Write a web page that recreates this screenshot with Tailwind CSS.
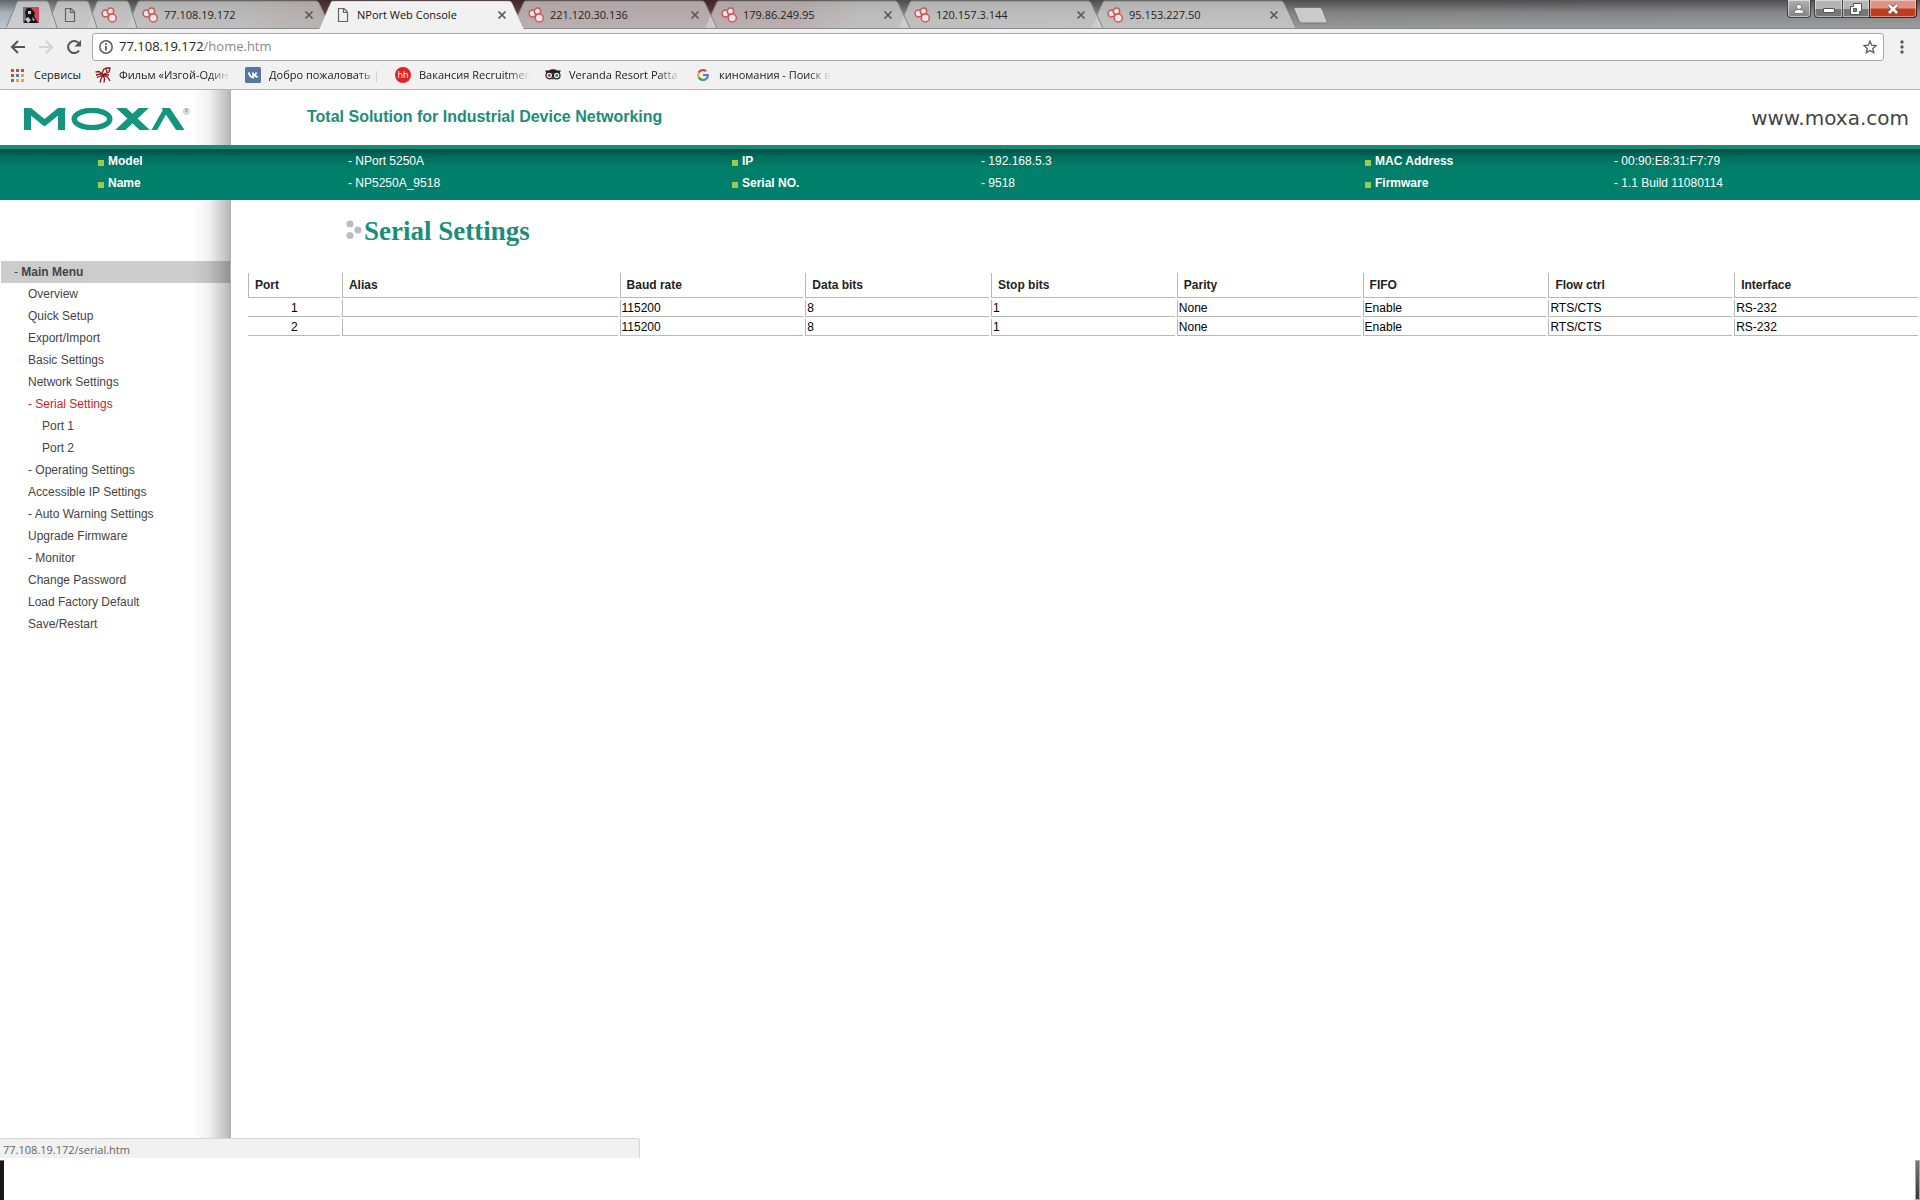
<!DOCTYPE html>
<html lang="en">
<head>
<meta charset="utf-8">
<title>NPort Web Console</title>
<script src="https://cdn.jsdelivr.net/npm/@tailwindcss/browser@4"></script>
</head>
<body class="flex min-h-screen flex-col bg-white font-['Liberation_Sans',Arial,sans-serif] text-xs text-black">

<svg class="hidden" aria-hidden="true">
  <symbol id="moxa-dots" viewBox="0 0 16 16">
    <g fill="#f3e4e4" stroke="#c9595b" stroke-width="1.5"><circle cx="4.500" cy="6.500" r="3.400"/><circle cx="9.500" cy="4.200" r="3.200"/><circle cx="11.300" cy="11" r="4"/></g>
  </symbol>
  <symbol id="page" viewBox="0 0 16 16"><path d="M3.500 1.500h5.500l3.500 3.500v9.500h-9zM8.500 1.500v4h4" fill="none" stroke="#626262" stroke-width="1.200"/></symbol>
  <symbol id="close" viewBox="0 0 10 10"><path d="M1.500 1.500l7 7m0-7l-7 7" stroke="#5a5a5a" stroke-width="1.700"/></symbol>
  <symbol id="tab-shape" viewBox="0 0 205 28" preserveAspectRatio="none"><path d="M0 28L12 2Q13 1 14 1H190Q192 1 193 3L205 28" stroke="#858585"/></symbol>
  <symbol id="pin-shape" viewBox="0 0 52 28"><path d="M0 28L11 2Q12 1 13 1H40Q42 1 43 3L51 28" stroke="#858585"/></symbol>
</svg>

<header class="flex flex-col bg-[#f1f1f1] font-['Open_Sans','Noto_Sans',sans-serif]">
  <div class="flex h-[29px] items-start border-b border-[#8b8b8d] bg-[linear-gradient(to_bottom,rgba(30,25,27,0.55),rgba(60,60,60,0.1)_45%,rgba(255,255,255,0.12)),linear-gradient(to_right,#b4c0cc_0px,#a9adb0_50px,#858585_130px,#777_240px,#6a3c40_320px,#6b3439_790px,#858585_860px,#8a8a8a_1300px,#8e9193_1920px)] pl-1.5">
    <nav class="flex" aria-label="Tabs">
      <button class="relative z-[7] flex h-7 w-[52px] items-center pl-[17px] pt-0.5" aria-label="Pinned tab 1">
        <svg class="absolute left-0 top-0 h-7 w-[52px] fill-[#cfcfcf]/80"><use href="#pin-shape"/></svg>
        <svg class="relative size-4" viewBox="0 0 16 16"><path fill="#777078" d="M0 0h16v16H0z"/><path fill="#d44558" d="M9 0h7v14h-5z"/><path fill="#181519" d="M4 1l4 0 4 5-1 3 4 7H1l2-6-1-5z"/><path d="M5 4h3v3H5zM2 12l3-2 3 3-3 3zM9 10l3 3-2 1z" fill="#c9c4c6"/></svg>
      </button>
      <button class="relative z-[6] -ml-3 flex h-7 w-[52px] items-center pl-4 pt-0.5" aria-label="Pinned tab 2">
        <svg class="absolute left-0 top-0 h-7 w-[52px] fill-[#cfcfcf]/80"><use href="#pin-shape"/></svg>
        <svg class="relative size-4"><use href="#page"/></svg>
      </button>
      <button class="relative z-[5] -ml-3 flex h-7 w-[52px] items-center pl-[15px] pt-0.5" aria-label="Pinned tab 3">
        <svg class="absolute left-0 top-0 h-7 w-[52px] fill-[#cfcfcf]/80"><use href="#pin-shape"/></svg>
        <svg class="relative size-4"><use href="#moxa-dots"/></svg>
      </button>
      <div class="relative z-[4] -ml-3 flex h-7 w-[205px] items-center gap-1.5 pl-4 pr-[17px] pt-0.5">
        <svg class="absolute left-0 top-0 h-7 w-[205px] fill-[#d0d0d0]/75"><use href="#tab-shape"/></svg>
        <svg class="relative size-4"><use href="#moxa-dots"/></svg>
        <a href="#" class="relative flex-1 text-[11px] text-[#222]">77.108.19.172</a>
        <button class="relative" aria-label="Close tab"><svg class="size-2.5"><use href="#close"/></svg></button>
      </div>
      <div class="relative z-10 -ml-3 flex h-[29px] w-[205px] items-center gap-1.5 pl-4 pr-[17px] pt-px">
        <svg class="absolute left-0 top-0 h-[29px] w-[205px] fill-[#f1f1f1]" viewBox="0 0 205 29"><path d="M0 29L12 2Q13 1 14 1H190Q192 1 193 3L205 29" stroke="#9a9a9a" stroke-width="0.5"/></svg>
        <svg class="relative size-4"><use href="#page"/></svg>
        <a href="#" class="relative flex-1 text-[11px] text-[#111]">NPort Web Console</a>
        <button class="relative" aria-label="Close tab"><svg class="size-2.5"><use href="#close"/></svg></button>
      </div>
      <div class="relative z-[4] -ml-3 flex h-7 w-[205px] items-center gap-1.5 pl-4 pr-[17px] pt-0.5">
        <svg class="absolute left-0 top-0 h-7 w-[205px] fill-[#d0d0d0]/75"><use href="#tab-shape"/></svg>
        <svg class="relative size-4"><use href="#moxa-dots"/></svg>
        <a href="#" class="relative flex-1 text-[11px] text-[#222]">221.120.30.136</a>
        <button class="relative" aria-label="Close tab"><svg class="size-2.5"><use href="#close"/></svg></button>
      </div>
      <div class="relative z-[3] -ml-3 flex h-7 w-[205px] items-center gap-1.5 pl-4 pr-[17px] pt-0.5">
        <svg class="absolute left-0 top-0 h-7 w-[205px] fill-[#d0d0d0]/75"><use href="#tab-shape"/></svg>
        <svg class="relative size-4"><use href="#moxa-dots"/></svg>
        <a href="#" class="relative flex-1 text-[11px] text-[#222]">179.86.249.95</a>
        <button class="relative" aria-label="Close tab"><svg class="size-2.5"><use href="#close"/></svg></button>
      </div>
      <div class="relative z-[2] -ml-3 flex h-7 w-[205px] items-center gap-1.5 pl-4 pr-[17px] pt-0.5">
        <svg class="absolute left-0 top-0 h-7 w-[205px] fill-[#d0d0d0]/75"><use href="#tab-shape"/></svg>
        <svg class="relative size-4"><use href="#moxa-dots"/></svg>
        <a href="#" class="relative flex-1 text-[11px] text-[#222]">120.157.3.144</a>
        <button class="relative" aria-label="Close tab"><svg class="size-2.5"><use href="#close"/></svg></button>
      </div>
      <div class="relative z-[1] -ml-3 flex h-7 w-[205px] items-center gap-1.5 pl-4 pr-[17px] pt-0.5">
        <svg class="absolute left-0 top-0 h-7 w-[205px] fill-[#d0d0d0]/75"><use href="#tab-shape"/></svg>
        <svg class="relative size-4"><use href="#moxa-dots"/></svg>
        <a href="#" class="relative flex-1 text-[11px] text-[#222]">95.153.227.50</a>
        <button class="relative" aria-label="Close tab"><svg class="size-2.5"><use href="#close"/></svg></button>
      </div>
    </nav>
    <button class="-ml-1 mt-[7px]" aria-label="New tab"><svg class="h-[17px] w-9" viewBox="0 0 36 17"><path d="M2 2Q1.500 .5 3 .5H27Q29 .5 30 2L35 14Q35.500 16 34 16H10Q8 16 7 14Z" fill="#cbcbcb" stroke="#777"/></svg></button>
    <div class="ml-auto mr-[3px] flex">
      <button class="mr-[3px] flex h-[18px] w-6 items-center justify-center rounded-b-[4px] border border-t-0 border-[#444] bg-linear-to-b from-[#b0b0b0] via-[#9a9a9a] to-[#838383] shadow-[inset_0_0_0_1px_rgba(255,255,255,0.5)]" aria-label="User">
        <svg class="size-3" viewBox="0 0 12 12"><path d="M1.500 10.500V8.500Q2 7 4.500 6.500H7.500Q10 7 10.500 8.500v2z" fill="#fff" stroke="#555" stroke-width=".7"/><circle cx="6" cy="3.800" r="2.500" fill="#fff" stroke="#555" stroke-width=".7"/></svg>
      </button>
      <button class="flex h-[18px] w-[29px] items-center justify-center rounded-bl-[4px] border border-t-0 border-[#444] bg-linear-to-b from-[#b5b5b5] from-50% to-[#777] to-55% shadow-[inset_0_0_0_1px_rgba(255,255,255,0.45)]" aria-label="Minimize">
        <svg class="h-3 w-3" viewBox="0 0 12 12"><path d="M.5 5.500h11v4H.5z" fill="#fff" stroke="#555"/></svg>
      </button>
      <button class="flex h-[18px] w-[26px] items-center justify-center border-b border-[#444] bg-linear-to-b from-[#b5b5b5] from-50% to-[#777] to-55% shadow-[inset_0_0_0_1px_rgba(255,255,255,0.45)]" aria-label="Restore">
        <svg class="size-3" viewBox="0 0 12 12"><path d="M3.500 .5h8v8h-2v3h-9v-8h3z" fill="#fff" stroke="#555"/><path d="M3.500 5.500h3v3h-3z" fill="#888" stroke="#555"/></svg>
      </button>
      <button class="flex h-[18px] w-12 items-center justify-center rounded-br-[4px] border border-t-0 border-[#4a1a12] bg-linear-to-b from-[#dc9484] from-45% to-[#c03a20] to-55% shadow-[inset_0_0_0_1px_rgba(255,255,255,0.45)]" aria-label="Close">
        <svg class="h-3 w-3" viewBox="0 0 12 12"><path d="M2 2l8 8m0-8l-8 8" stroke="#555" stroke-width="4"/><path d="M2 2l8 8m0-8l-8 8" stroke="#fff" stroke-width="2.500"/></svg>
      </button>
    </div>
  </div>

  <div class="flex h-8 items-end">
    <div class="flex h-7 w-[92px] items-center gap-3 pl-2.5">
      <button aria-label="Back"><svg class="size-4" viewBox="0 0 16 16"><path d="M15 8H2.500M8 2L2 8l6 6" fill="none" stroke="#555" stroke-width="2"/></svg></button>
      <button aria-label="Forward"><svg class="size-4" viewBox="0 0 16 16"><path d="M1 8h12.500M8 2l6 6-6 6" fill="none" stroke="#d2d2d2" stroke-width="2"/></svg></button>
      <button aria-label="Reload"><svg class="size-4" viewBox="0 0 16 16"><path d="M13 11.500A6 6 0 1 1 12.300 3.800" fill="none" stroke="#555" stroke-width="2.100"/><path d="M15 1v6.500H8.500z" fill="#555"/></svg></button>
    </div>
    <div class="flex h-7 flex-1 items-center rounded-[3px] border border-[#a9a9a9] bg-white pl-1.5 pr-1.5">
      <svg class="mr-1.5 size-[14px]" viewBox="0 0 14 14"><circle cx="7" cy="7" r="6.200" fill="none" stroke="#5a5a5a" stroke-width="1.500"/><path d="M6.100 6h1.800v4.500H6.100zM6.100 3.300h1.800V5H6.100z" fill="#5a5a5a"/></svg>
      <a href="#" class="flex-1 text-[13px] text-[#222]">77.108.19.172<span class="text-[#8a8a8a]">/home.htm</span></a>
      <button aria-label="Bookmark"><svg class="size-[14px]" viewBox="0 0 14 14"><path d="M7 1.200l1.700 4 4.300.4-3.200 2.900.9 4.200L7 10.500l-3.700 2.200.9-4.200L1 5.600l4.300-.4z" fill="none" stroke="#5a5a5a" stroke-width="1.300"/></svg></button>
    </div>
    <button class="flex h-7 w-9 items-center justify-center" aria-label="Menu"><svg class="h-[14px] w-1" viewBox="0 0 4 14" fill="#5a5a5a"><circle cx="2" cy="2" r="1.700"/><circle cx="2" cy="7" r="1.700"/><circle cx="2" cy="12" r="1.700"/></svg></button>
  </div>

  <nav class="flex h-[29px] items-center gap-[14px] border-b border-[#b5b5b5] pl-2.5 text-[11px] whitespace-nowrap text-[#222]" aria-label="Bookmarks">
    <a href="#" class="flex items-center gap-2"><svg class="size-4" viewBox="0 0 16 16"><g fill="#cc4b3f"><path d="M1 2h3v3H1zM6 2h3v3H6zM11 2h3v3h-3zM1 7h3v3H1z"/></g><path d="M6 7h3v3H6z" fill="#4a80c8"/><path d="M11 7h3v3h-3zM6 12h3v3H6zM11 12h3v3h-3z" fill="#d9a93a"/><path d="M1 12h3v3H1z" fill="#3d9360"/></svg><span class="w-[47px]">Сервисы</span></a>
    <a href="#" class="flex items-center gap-2"><svg class="size-4" viewBox="0 0 16 16"><g fill="none" stroke="#8d1719" stroke-width="1.300"><path d="M7 6L9 2l3-1 3 0-1 4-5 2M11 2l1 3M.5 5L4 4.500 7 7M1 8l5-1M2 10.500L7 8.500M5 15.500L6 12 7.500 9M8.500 9l1 3-.5 3.500M9 8.500l3.500 1.500 2.500 4M9 7.500l5 .5"/></g><circle cx="8" cy="8" r="1.800" fill="#8d1719"/></svg><span class="w-28 overflow-hidden [mask-image:linear-gradient(to_right,black_80%,transparent)]">Фильм «Изгой-Один</span></a>
    <a href="#" class="flex items-center gap-2"><svg class="size-4" viewBox="0 0 16 16"><rect width="16" height="16" rx="1.500" fill="#55779f"/><path d="M3.500 5.500L5.500 9.500 8 10.500V5.500M8 8.500Q10.500 8 11.500 5.500M9 8.500Q11 8.500 12.500 10.500" fill="none" stroke="#fff" stroke-width="1.800"/></svg><span class="w-28 overflow-hidden [mask-image:linear-gradient(to_right,black_80%,transparent)]">Добро пожаловать |</span></a>
    <a href="#" class="flex items-center gap-2"><span class="flex size-4 items-center justify-center rounded-full bg-[#e0232b] text-[9px] leading-4 text-white">hh</span><span class="w-28 overflow-hidden [mask-image:linear-gradient(to_right,black_80%,transparent)]">Вакансия Recruitmen</span></a>
    <a href="#" class="flex items-center gap-2"><svg class="size-4" viewBox="0 0 16 16"><path d="M0 3.500h3.500Q8 1 12.500 3.500H16L14.500 6h-13z" fill="#222"/><g fill="#eee" stroke="#222" stroke-width="1.200"><circle cx="4.300" cy="8.500" r="3.300"/><circle cx="11.700" cy="8.500" r="3.300"/></g><circle cx="4.300" cy="8.500" r="1.400" fill="#b43a34"/><circle cx="11.700" cy="8.500" r="1.400" fill="#3d7f4c"/><path d="M7 11h2l-1 2z" fill="#222"/></svg><span class="w-28 overflow-hidden [mask-image:linear-gradient(to_right,black_80%,transparent)]">Veranda Resort Patta</span></a>
    <a href="#" class="flex items-center gap-2"><svg class="size-4" viewBox="0 0 16 16" fill="none" stroke-width="2.200"><path d="M11.200 4.200A5 5 0 0 0 3.600 5.800" stroke="#e0483c"/><path d="M3.600 5.800a5 5 0 0 0 0 4.400" stroke="#eeb422"/><path d="M3.600 10.200a5 5 0 0 0 7.600 1.700" stroke="#3a9f57"/><path d="M11.200 11.900A5 5 0 0 0 12.800 8H8" stroke="#4680dc"/></svg><span class="w-28 overflow-hidden [mask-image:linear-gradient(to_right,black_80%,transparent)]">киномания - Поиск в</span></a>
  </nav>
</header>

<div class="flex h-[55px]">
  <div class="w-[231px] bg-[linear-gradient(to_left,rgba(0,0,0,0.3),rgba(0,0,0,0.2)_8px,rgba(0,0,0,0.05)_23px,transparent_38px)] pl-6 pt-[18px]">
    <svg class="h-[22px] w-[170px]" viewBox="0 0 170 22" role="img" aria-label="MOXA">
      <g fill="none" stroke="#13957f">
        <g stroke-width="7"><line x1="3.500" y1="0" x2="3.500" y2="22"/><line x1="37.500" y1="0" x2="37.500" y2="22"/></g>
        <g stroke-width="6"><line x1="1" y1="-1" x2="22" y2="16"/><line x1="40" y1="-1" x2="19" y2="16"/></g>
        <ellipse cx="68" cy="11" rx="17.500" ry="8.800" stroke-width="5"/>
        <ellipse cx="68" cy="11" rx="18" ry="8.500" stroke-width="5"/>
        <g stroke-width="7"><line x1="93" y1="-4" x2="125" y2="26"/><line x1="124" y1="-4" x2="92" y2="26"/></g>
        <line x1="128" y1="26" x2="144" y2="-2" stroke-width="5"/><line x1="139" y1="-4" x2="159" y2="26" stroke-width="7"/>
      </g>
      <text x="159" y="7" font-size="9" fill="#13957f">®</text>
    </svg>
  </div>
  <div class="flex flex-1 items-start justify-between pl-[76px] pr-[11px]">
    <p class="pt-[15px] text-base font-bold text-[#1c8d78]">Total Solution for Industrial Device Networking</p>
    <a href="#" class="pt-[14px] font-['DejaVu_Sans',sans-serif] text-xl text-[#444]">www.moxa.com</a>
  </div>
</div>

<section class="border-t-4 border-[#178d79] bg-[linear-gradient(to_bottom,#004d40,#005f51_4px,#00725f_10px,#00806a_20px,#00806b)] pb-1.5 pt-px text-white">
  <dl class="grid grid-cols-[250fr_384fr_249fr_384fr_249fr_306fr] pl-[98px] leading-[22px]">
    <dt class="flex items-center gap-1 font-bold"><i class="mt-1 size-1.5 bg-[#9acb50]"></i>Model</dt><dd>- NPort 5250A</dd>
    <dt class="flex items-center gap-1 font-bold"><i class="mt-1 size-1.5 bg-[#9acb50]"></i>IP</dt><dd>- 192.168.5.3</dd>
    <dt class="flex items-center gap-1 font-bold"><i class="mt-1 size-1.5 bg-[#9acb50]"></i>MAC Address</dt><dd>- 00:90:E8:31:F7:79</dd>
    <dt class="flex items-center gap-1 font-bold"><i class="mt-1 size-1.5 bg-[#9acb50]"></i>Name</dt><dd>- NP5250A_9518</dd>
    <dt class="flex items-center gap-1 font-bold"><i class="mt-1 size-1.5 bg-[#9acb50]"></i>Serial NO.</dt><dd>- 9518</dd>
    <dt class="flex items-center gap-1 font-bold"><i class="mt-1 size-1.5 bg-[#9acb50]"></i>Firmware</dt><dd>- 1.1 Build 11080114</dd>
  </dl>
</section>

<div class="flex flex-1">
  <aside class="w-[231px] bg-[linear-gradient(to_left,rgba(0,0,0,0.3),rgba(0,0,0,0.2)_8px,rgba(0,0,0,0.05)_23px,transparent_38px)] px-px pt-[61px] leading-[22px] text-[#444]">
    <h2 class="bg-black/20 pl-[13px] font-bold"><span class="font-normal">-</span> Main Menu</h2>
    <nav class="flex flex-col pl-[27px]" aria-label="Main menu">
      <a href="#">Overview</a>
      <a href="#">Quick Setup</a>
      <a href="#">Export/Import</a>
      <a href="#">Basic Settings</a>
      <a href="#">Network Settings</a>
      <a href="#" class="text-[#d01c28]">- Serial Settings</a>
      <a href="#" class="pl-[14px]">Port 1</a>
      <a href="#" class="pl-[14px]">Port 2</a>
      <a href="#">- Operating Settings</a>
      <a href="#">Accessible IP Settings</a>
      <a href="#">- Auto Warning Settings</a>
      <a href="#">Upgrade Firmware</a>
      <a href="#">- Monitor</a>
      <a href="#">Change Password</a>
      <a href="#">Load Factory Default</a>
      <a href="#">Save/Restart</a>
    </nav>
  </aside>
  <main class="flex-1 pl-[15px]">
    <h1 class="flex items-start gap-0.5 pl-[100px] pt-4 font-['Liberation_Serif','Times_New_Roman',serif] text-[27px] leading-[30px] font-bold text-[#1c8d78]">
      <svg class="mt-1 h-5 w-4" viewBox="0 0 16 20" fill="#bdbdbd"><circle cx="4" cy="4" r="3.600"/><circle cx="12" cy="10" r="3.600"/><circle cx="4" cy="15.500" r="3.600"/></svg>
      Serial Settings
    </h1>
    <table class="mt-[25px] w-full table-fixed border-separate border-spacing-0.5 text-left">
      <colgroup><col class="w-1/18"><col class="w-1/6"><col span="7" class="w-1/9"></colgroup>
      <thead>
        <tr class="h-[25px] text-[#222] *:border-b *:border-l *:border-[#b8b8b8] *:pl-1.5">
          <th>Port</th><th>Alias</th><th>Baud rate</th><th>Data bits</th><th>Stop bits</th><th>Parity</th><th>FIFO</th><th>Flow ctrl</th><th>Interface</th>
        </tr>
      </thead>
      <tbody class="leading-4">
        <tr class="*:border-b *:border-[#b8b8b8] *:pl-px *:not-first:border-l">
          <td class="text-center">1</td><td></td><td>115200</td><td>8</td><td>1</td><td>None</td><td>Enable</td><td>RTS/CTS</td><td>RS-232</td>
        </tr>
        <tr class="*:border-b *:border-[#b8b8b8] *:pl-px *:not-first:border-l">
          <td class="text-center">2</td><td></td><td>115200</td><td>8</td><td>1</td><td>None</td><td>Enable</td><td>RTS/CTS</td><td>RS-232</td>
        </tr>
      </tbody>
    </table>
  </main>
</div>

<footer class="flex flex-col gap-0.5 font-['Open_Sans',sans-serif]">
  <div class="h-5 w-1/3 rounded-tr-[3px] border-r border-t border-[#d6d6d6] bg-[#f1f1f1] pl-[3px] text-[11px] leading-[22px] text-[#666]">77.108.19.172/serial.htm</div>
  <div class="flex h-10 justify-between">
    <div class="w-1 border-t border-[#777] bg-[#1d1518]"></div>
    <div class="w-[5px] border border-[#aaa] bg-linear-to-b from-[#777] to-[#3c3638]"></div>
  </div>
</footer>
</body>
</html>
